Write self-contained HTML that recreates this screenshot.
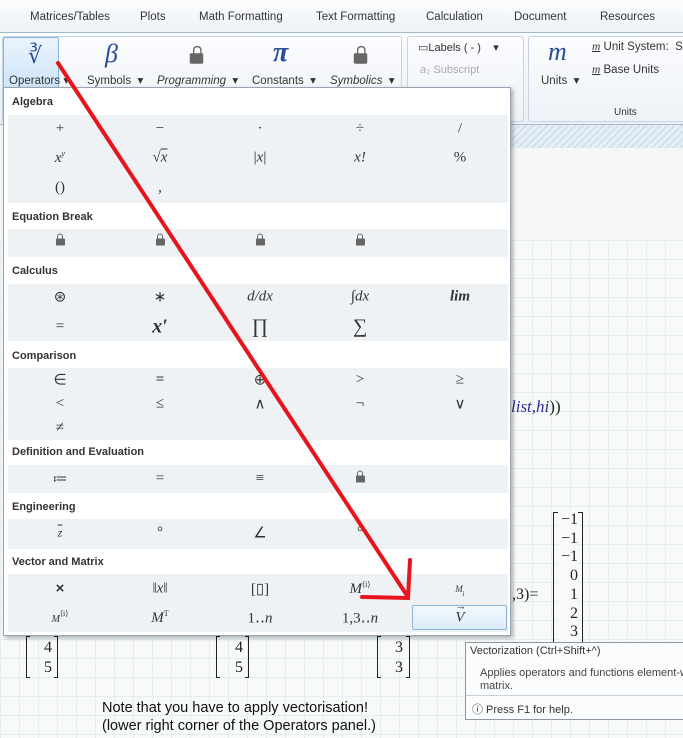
<!DOCTYPE html><html><head><meta charset="utf-8"><style>
*{margin:0;padding:0;box-sizing:border-box}
body{width:683px;height:738px;overflow:hidden;position:relative;font-family:"Liberation Sans",sans-serif;background:#f5f8f4}
.a{position:absolute}
.grid{background-color:#f7faf6;background-image:linear-gradient(#e3edf6 1px,transparent 1px),linear-gradient(90deg,#e3edf6 1px,transparent 1px);background-size:19px 19px}
.tabs{left:0;top:0;width:683px;height:33px;background:linear-gradient(#fbfcfd,#eef3f8);border-bottom:1px solid #9fb6cb;font-size:11.5px;color:#333}
.tabs span{position:absolute;top:11px}
.rib{left:0;top:33px;width:683px;height:92px;background:linear-gradient(#f9fbfd,#e9eff5);border-bottom:1px solid #aabdd0}
.grp{position:absolute;top:3px;height:86px;border:1px solid #c7d4e1;border-radius:3px;background:linear-gradient(#fbfcfe,#eef2f7)}
.lbl{font-size:11.5px;color:#333;position:absolute;white-space:nowrap}
.panel{left:3px;top:87px;width:508px;height:549px;background:#fff;border:1px solid #9aa5b1;box-shadow:2px 2px 4px rgba(0,0,0,.3)}
.h{position:absolute;left:8px;font-size:11px;font-weight:bold;color:#333}
.g{position:absolute;left:4px;width:500px;background:#eef2f5}
.c{position:absolute;width:100px;text-align:center;font-family:"Liberation Serif",serif;font-size:15px;color:#333;transform:translateY(-50%)}
.lk{display:inline-block;width:9px;height:7px;background:#666;border-radius:1px;position:relative;margin-top:4px}
.lk:before{content:"";position:absolute;left:1.5px;top:-5px;width:6px;height:6px;border:1.5px solid #666;border-bottom:none;border-radius:3px 3px 0 0;box-sizing:border-box}
.m{font-family:"Liberation Serif",serif;font-size:15px;color:#222;position:absolute}
</style></head><body>
<div class="a grid" style="left:0;top:240px;width:683px;height:498px"></div>
<div class="a" style="left:511px;top:125px;width:172px;height:23px;background:repeating-linear-gradient(135deg,#d3e1ee 0 2px,#e6eef6 2px 5px)"></div>
<div class="a tabs"><span style="left:30px">Matrices/Tables</span><span style="left:140px">Plots</span><span style="left:199px">Math Formatting</span><span style="left:316px">Text Formatting</span><span style="left:426px">Calculation</span><span style="left:514px">Document</span><span style="left:600px">Resources</span></div>
<div class="a rib">
<div class="grp" style="left:2px;width:400px"></div>
<div class="a" style="left:3px;top:4px;width:56px;height:52px;border:1px solid #8fb4dc;border-radius:2px;background:linear-gradient(#eaf4fd,#cfe4f8)"></div>
<div class="a" style="left:28px;top:10px;font-family:'Liberation Serif';font-size:22px;color:#2a4d9a">∛</div>
<div class="a" style="left:105px;top:6px;font-family:'Liberation Serif';font-size:26px;font-style:italic;color:#2a4d9a">β</div>
<div class="a" style="left:192px;top:16px"><span class="lk" style="transform:scale(1.5)"></span></div>
<div class="a" style="left:273px;top:4px;font-family:'Liberation Serif';font-size:28px;font-style:italic;font-weight:bold;color:#2a4d9a">π</div>
<div class="a" style="left:356px;top:16px"><span class="lk" style="transform:scale(1.5)"></span></div>
<div class="lbl" style="left:9px;top:40px">Operators ▾</div>
<div class="lbl" style="left:87px;top:40px">Symbols&nbsp; ▾</div>
<div class="lbl" style="left:157px;top:40px"><i>Programming</i>&nbsp; ▾</div>
<div class="lbl" style="left:252px;top:40px">Constants&nbsp; ▾</div>
<div class="lbl" style="left:330px;top:40px"><i>Symbolics</i>&nbsp; ▾</div>
<div class="grp" style="left:407px;width:117px"></div>
<div class="lbl" style="left:418px;top:8px;font-size:11px">▭Labels ( - )&nbsp;&nbsp;&nbsp; ▾</div>
<div class="lbl" style="left:420px;top:31px;color:#aaa;font-size:11px"><i>a</i>₂ Subscript</div>
<div class="grp" style="left:528px;width:160px"></div>
<div class="a" style="left:548px;top:4px;font-family:'Liberation Serif';font-size:26px;font-style:italic;color:#2a4d9a">m</div>
<div class="lbl" style="left:541px;top:40px">Units&nbsp; ▾</div>
<div class="lbl" style="left:592px;top:8px"><u style="font-family:'Liberation Serif';font-style:italic">m</u> Unit System:&nbsp; SI</div>
<div class="lbl" style="left:592px;top:31px"><u style="font-family:'Liberation Serif';font-style:italic">m</u> Base Units</div>
<div class="lbl" style="left:614px;top:74px;font-size:10px">Units</div>
</div>
<div class="m" style="left:511px;top:397px;color:#2a2a9a;font-size:17px"><i>list</i>,<i>hi</i><span style="color:#222">))</span></div>
<div class="m" style="left:512px;top:586px;font-size:16px">,3)=</div>
<div class="a" style="left:553px;top:512px;width:30px;height:140px;border:1.5px solid #222"></div>
<div class="a" style="left:558px;top:510px;width:20px;height:144px;background:#f7faf6"></div>
<div class="m" style="left:556px;top:511px;line-height:18.7px;text-align:right;width:22px;font-size:16px">−1<br>−1<br>−1<br>0<br>1<br>2<br>3</div>
<div class="m" style="left:30px;top:638px;line-height:20px;text-align:right;width:22px;font-size:16px">4<br>5</div>
<div class="m" style="left:221px;top:638px;line-height:20px;text-align:right;width:22px;font-size:16px">4<br>5</div>
<div class="m" style="left:381px;top:638px;line-height:20px;text-align:right;width:22px;font-size:16px">3<br>3</div>
<div class="a" style="left:26px;top:636px;width:4px;height:42px;border:1.5px solid #222;border-right:none"></div>
<div class="a" style="left:54px;top:636px;width:4px;height:42px;border:1.5px solid #222;border-left:none"></div>
<div class="a" style="left:216px;top:636px;width:4px;height:42px;border:1.5px solid #222;border-right:none"></div>
<div class="a" style="left:245px;top:636px;width:4px;height:42px;border:1.5px solid #222;border-left:none"></div>
<div class="a" style="left:377px;top:636px;width:4px;height:42px;border:1.5px solid #222;border-right:none"></div>
<div class="a" style="left:406px;top:636px;width:4px;height:42px;border:1.5px solid #222;border-left:none"></div>
<div class="a" style="left:102px;top:699px;font-size:14.5px;line-height:18px;color:#111">Note that you have to apply vectorisation!<br>(lower right corner of the Operators panel.)</div>
<div class="a" style="left:465px;top:642px;width:220px;height:78px;background:#fbfcfd;border:1px solid #8a96a3;font-size:11px;color:#333;white-space:nowrap;overflow:hidden">
<div style="position:absolute;left:4px;top:2px">Vectorization (Ctrl+Shift+^)</div>
<div style="position:absolute;left:14px;top:24px;line-height:13px;color:#444">Applies operators and functions element-w<br>matrix.</div>
<div style="position:absolute;left:0;top:52px;width:220px;border-top:1px solid #c8d0d8"></div>
<div style="position:absolute;left:6px;top:58px">ⓘ Press F1 for help.</div></div>
<div class="a panel">
<div class="h" style="top:8px">Algebra</div>
<div class="g" style="top:27px;height:88px"></div>
<div class="h" style="top:123px">Equation Break</div>
<div class="g" style="top:141px;height:28px"></div>
<div class="h" style="top:177px">Calculus</div>
<div class="g" style="top:196px;height:57px"></div>
<div class="h" style="top:262px">Comparison</div>
<div class="g" style="top:280px;height:72px"></div>
<div class="h" style="top:358px">Definition and Evaluation</div>
<div class="g" style="top:377px;height:28px"></div>
<div class="h" style="top:413px">Engineering</div>
<div class="g" style="top:431px;height:30px"></div>
<div class="h" style="top:468px">Vector and Matrix</div>
<div class="g" style="top:486px;height:58px"></div>
<div class="a" style="left:408px;top:517px;width:95px;height:25px;border:1px solid #8fb4dc;border-radius:2px;background:linear-gradient(#f4f9fe,#dcebf9)"></div>
</div>
<div id="cells"></div>
<script>
var xs=[10,110,210,310,410];
var rows=[[129,["+","−","·","÷","/"]],[158,["<i>x<sup style='font-size:8px'>y</sup></i>","√<i style='text-decoration:overline'>x</i>","|<i>x</i>|","<i>x!</i>","%"]],[188,["()",","]],
[242,["L","L","L","L"]],[297,["⊛","∗","<i>d/dx</i>","∫<i>dx</i>","<b><i>lim</i></b>"]],[327,["=","<b style='font-size:20px'><i>x′</i></b>","<span style='font-size:20px'>∏</span>","<span style='font-size:20px'>∑</span>"]],
[380,["∈","<b>=</b>","⊕","&gt;","≥"]],[404,["&lt;","≤","∧","¬","∨"]],[428,["≠"]],[479,["≔","=","≡","L"]],[533,["<i style='font-size:12px;text-decoration:overline'>z</i>","°","∠","°"]],
[589,["<b style='font-family:Liberation Sans'>×</b>","‖<i>x</i>‖","[▯]","<i>M</i><sup style='font-size:8px'>⟨i⟩</sup>","<i style='font-size:9px'>M</i><sub style='font-size:7px'>i</sub>"]],
[618,["<i style='font-size:10px'>M</i><sup style='font-size:8px'>⟨i⟩</sup>","<i>M</i><sup style='font-size:8px'>T</sup>","1‥<i>n</i>","1,3‥<i>n</i>","<span style='position:relative'><i>V</i><span style='position:absolute;left:0;top:-9px;font-size:11px'>→</span></span>"]]];
var h="";rows.forEach(function(r){r[1].forEach(function(t,i){if(t=="L")t="<span class='lk'></span>";h+="<div class='c' style='left:"+xs[i]+"px;top:"+r[0]+"px'>"+t+"</div>";});});
document.getElementById("cells").innerHTML=h;
</script>
<svg class="a" style="left:0;top:0" width="683" height="738"><g stroke="#e8141c" stroke-width="4" fill="none" stroke-linecap="round"><path d="M58 63 L408 597"/><path d="M410 560 L408 598 L362 597"/></g></svg>
</body></html>
